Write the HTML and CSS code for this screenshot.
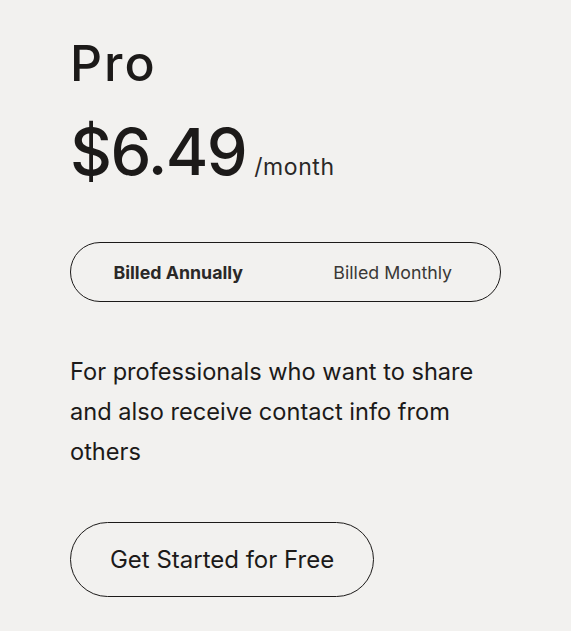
FILE: index.html
```html
<!DOCTYPE html>
<html>
<head>
<meta charset="utf-8">
<link rel="stylesheet" href="styles.css">
</head>
<body>
<div class="card">
  <h1 class="plan">Pro</h1>
  <div class="price-row">
    <span class="price">$6.49</span>
    <span class="per">/month</span>
  </div>
  <div class="toggle">
    <span class="opt opt-active">Billed Annually</span>
    <span class="opt">Billed Monthly</span>
  </div>
  <p class="desc">For professionals who want to share and also receive contact info from others</p>
  <a class="cta">Get Started for Free</a>
</div>
</body>
</html>
```
FILE: styles.css
```css
html, body {
  margin: 0;
  padding: 0;
}
body {
  background: #f2f1ef;
  font-family: Inter, "Noto Sans", sans-serif;
  color: #1c1a19;
  width: 571px;
  height: 631px;
  overflow: hidden;
}
.card {
  padding: 34px 0 0 70px;
  display: flex;
  flex-direction: column;
  align-items: flex-start;
}
.plan {
  margin: 0;
  font-size: 50px;
  font-weight: 500;
  line-height: 58px;
  letter-spacing: 2px;
}
.price-row {
  display: flex;
  align-items: baseline;
  margin-top: 20px;
  gap: 8px;
}
.price {
  font-size: 65px;
  font-weight: 500;
  line-height: 80px;
  letter-spacing: -1.6px;
}
.per {
  font-size: 23px;
  letter-spacing: 0.6px;
  color: #2a2827;
}
.toggle {
  margin-top: 50px;
  width: 431px;
  height: 60px;
  box-sizing: border-box;
  border: 1px solid #1c1a19;
  border-radius: 30px;
  display: flex;
  align-items: center;
}
.opt {
  flex: 1;
  text-align: center;
  font-size: 17.8px;
  color: #3a3836;
}
.opt-active {
  font-weight: 700;
  color: #2a2827;
}
.desc {
  margin: 50px 0 0;
  width: 440px;
  font-size: 23.6px;
  line-height: 40px;
  color: #1c1a19;
}
.cta {
  margin-top: 50px;
  width: 304px;
  height: 75px;
  box-sizing: border-box;
  border: 1px solid #1c1a19;
  border-radius: 38px;
  display: flex;
  align-items: center;
  justify-content: center;
  font-size: 24px;
  color: #1c1a19;
}
```
